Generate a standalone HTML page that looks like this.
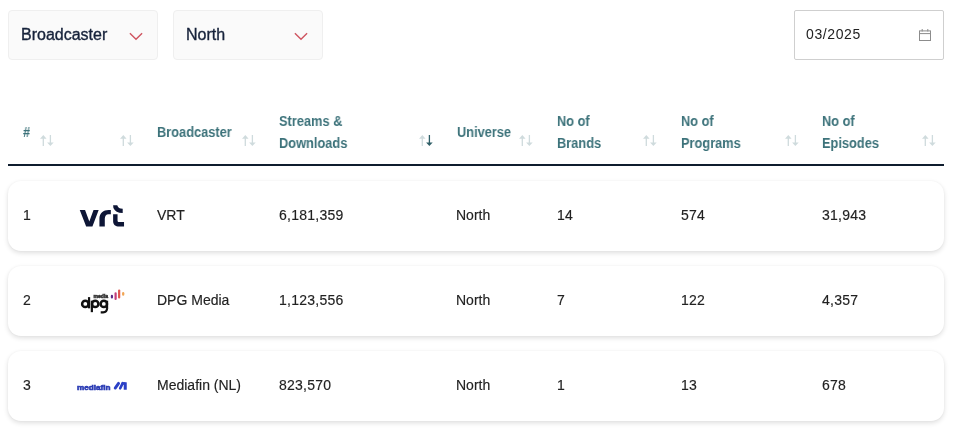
<!DOCTYPE html>
<html><head><meta charset="utf-8">
<style>
*{box-sizing:border-box;margin:0;padding:0}
html,body{width:960px;height:434px;background:#fff;overflow:hidden;font-family:"Liberation Sans",sans-serif;position:relative;-webkit-font-smoothing:antialiased}
.c,.t,.h,svg{will-change:transform}
.abs{position:absolute}
.sel{position:absolute;top:10px;width:150px;height:50px;background:#fafafa;border:1px solid #efefef;border-radius:4px}
.sel .t{position:absolute;left:12px;top:15px;font-size:16px;line-height:18px;color:#16223a;white-space:nowrap;-webkit-text-stroke:0.35px #16223a}
.sel svg{position:absolute;left:120px;top:21px}
.date{position:absolute;left:794px;top:10px;width:150px;height:50px;border:1px solid #cfcfcf;border-radius:2px;background:#fff}
.date .t{position:absolute;left:11px;top:15px;font-size:14px;line-height:16px;color:#222;white-space:nowrap;letter-spacing:0.6px}
.date svg{position:absolute;left:124px;top:18px}
.h{position:absolute;font-size:14px;font-weight:bold;color:#3c727a;line-height:22px;white-space:nowrap;transform:scaleX(0.915);transform-origin:0 0}
.si{position:absolute;top:134.8px}
.hline{position:absolute;left:8px;top:164px;width:936px;height:2px;background:#0f1d2e}
.card{position:absolute;left:8px;width:936px;height:70px;background:#fff;border-radius:13px;box-shadow:0 2px 5px rgba(0,0,0,0.13),0 0 2px rgba(0,0,0,0.04)}
.n{letter-spacing:0.25px}
.c{position:absolute;font-size:14px;line-height:16px;color:#222;white-space:nowrap;-webkit-text-stroke:0.15px #222}
</style></head><body>

<div class="sel" style="left:8px"><div class="t">Broadcaster</div>
<svg width="14" height="9" viewBox="0 0 14 9"><path d="M0.9 1.2 L7 7.3 L13.1 1.2" fill="none" stroke="#cf5561" stroke-width="1.4"/></svg></div>
<div class="sel" style="left:173px"><div class="t">North</div>
<svg width="14" height="9" viewBox="0 0 14 9"><path d="M0.9 1.2 L7 7.3 L13.1 1.2" fill="none" stroke="#cf5561" stroke-width="1.4"/></svg></div>

<div class="date"><div class="t">03/2025</div>
<svg width="12" height="12" viewBox="0 0 12 12"><rect x="0.5" y="1.9" width="11" height="9.6" fill="none" stroke="#8c8c8c" stroke-width="1"/><line x1="0.5" y1="4.6" x2="11.5" y2="4.6" stroke="#8c8c8c" stroke-width="1"/><line x1="3.2" y1="0" x2="3.2" y2="2.5" stroke="#8c8c8c"/><line x1="8.8" y1="0" x2="8.8" y2="2.5" stroke="#8c8c8c"/></svg></div>

<!-- header -->
<div class="h" style="left:23px;top:121px">#</div>
<div class="h" style="left:157px;top:121px">Broadcaster</div>
<div class="h" style="left:279px;top:110px">Streams &amp;<br>Downloads</div>
<div class="h" style="left:456.5px;top:121px">Universe</div>
<div class="h" style="left:557px;top:110px">No of<br>Brands</div>
<div class="h" style="left:681px;top:110px">No of<br>Programs</div>
<div class="h" style="left:822px;top:110px">No of<br>Episodes</div>



<svg class="si" style="left:40px" width="14" height="12" viewBox="0 0 14 12"><path d="M3.3 11V2.5" stroke="#cfdbdd" stroke-width="1.3"/><path d="M0 3.7L3.3 0L6.6 3.7Z" fill="#cfdbdd"/><path d="M10.4 0V8.5" stroke="#cfdbdd" stroke-width="1.3"/><path d="M7.1 7.4L10.4 11.1L13.7 7.4Z" fill="#cfdbdd"/></svg><svg class="si" style="left:120px" width="14" height="12" viewBox="0 0 14 12"><path d="M3.3 11V2.5" stroke="#cfdbdd" stroke-width="1.3"/><path d="M0 3.7L3.3 0L6.6 3.7Z" fill="#cfdbdd"/><path d="M10.4 0V8.5" stroke="#cfdbdd" stroke-width="1.3"/><path d="M7.1 7.4L10.4 11.1L13.7 7.4Z" fill="#cfdbdd"/></svg><svg class="si" style="left:242px" width="14" height="12" viewBox="0 0 14 12"><path d="M3.3 11V2.5" stroke="#cfdbdd" stroke-width="1.3"/><path d="M0 3.7L3.3 0L6.6 3.7Z" fill="#cfdbdd"/><path d="M10.4 0V8.5" stroke="#cfdbdd" stroke-width="1.3"/><path d="M7.1 7.4L10.4 11.1L13.7 7.4Z" fill="#cfdbdd"/></svg><svg class="si" style="left:419px" width="14" height="12" viewBox="0 0 14 12"><path d="M3.3 11V2.5" stroke="#cfdbdd" stroke-width="1.3"/><path d="M0 3.7L3.3 0L6.6 3.7Z" fill="#cfdbdd"/><path d="M10.4 0V8.5" stroke="#2f5f67" stroke-width="1.3"/><path d="M7.1 7.4L10.4 11.1L13.7 7.4Z" fill="#2f5f67"/></svg><svg class="si" style="left:519px" width="14" height="12" viewBox="0 0 14 12"><path d="M3.3 11V2.5" stroke="#cfdbdd" stroke-width="1.3"/><path d="M0 3.7L3.3 0L6.6 3.7Z" fill="#cfdbdd"/><path d="M10.4 0V8.5" stroke="#cfdbdd" stroke-width="1.3"/><path d="M7.1 7.4L10.4 11.1L13.7 7.4Z" fill="#cfdbdd"/></svg><svg class="si" style="left:643.4px" width="14" height="12" viewBox="0 0 14 12"><path d="M3.3 11V2.5" stroke="#cfdbdd" stroke-width="1.3"/><path d="M0 3.7L3.3 0L6.6 3.7Z" fill="#cfdbdd"/><path d="M10.4 0V8.5" stroke="#cfdbdd" stroke-width="1.3"/><path d="M7.1 7.4L10.4 11.1L13.7 7.4Z" fill="#cfdbdd"/></svg><svg class="si" style="left:784.7px" width="14" height="12" viewBox="0 0 14 12"><path d="M3.3 11V2.5" stroke="#cfdbdd" stroke-width="1.3"/><path d="M0 3.7L3.3 0L6.6 3.7Z" fill="#cfdbdd"/><path d="M10.4 0V8.5" stroke="#cfdbdd" stroke-width="1.3"/><path d="M7.1 7.4L10.4 11.1L13.7 7.4Z" fill="#cfdbdd"/></svg><svg class="si" style="left:922px" width="14" height="12" viewBox="0 0 14 12"><path d="M3.3 11V2.5" stroke="#cfdbdd" stroke-width="1.3"/><path d="M0 3.7L3.3 0L6.6 3.7Z" fill="#cfdbdd"/><path d="M10.4 0V8.5" stroke="#cfdbdd" stroke-width="1.3"/><path d="M7.1 7.4L10.4 11.1L13.7 7.4Z" fill="#cfdbdd"/></svg>
<div class="hline"></div>
<div class="card" style="top:181px"></div>
<div class="card" style="top:266px"></div>
<div class="card" style="top:351px"></div>

<div class="c n" style="left:23px;top:207px">1</div>
<div class="c" style="left:157px;top:207px">VRT</div>
<div class="c n" style="left:279px;top:207px">6,181,359</div>
<div class="c" style="left:456px;top:207px">North</div>
<div class="c n" style="left:557px;top:207px">14</div>
<div class="c n" style="left:681px;top:207px">574</div>
<div class="c n" style="left:822px;top:207px">31,943</div>

<div class="c n" style="left:23px;top:292px">2</div>
<div class="c" style="left:157px;top:292px">DPG Media</div>
<div class="c n" style="left:279px;top:292px">1,123,556</div>
<div class="c" style="left:456px;top:292px">North</div>
<div class="c n" style="left:557px;top:292px">7</div>
<div class="c n" style="left:681px;top:292px">122</div>
<div class="c n" style="left:822px;top:292px">4,357</div>

<div class="c n" style="left:23px;top:377px">3</div>
<div class="c" style="left:157px;top:377px">Mediafin (NL)</div>
<div class="c n" style="left:279px;top:377px">823,570</div>
<div class="c" style="left:456px;top:377px">North</div>
<div class="c n" style="left:557px;top:377px">1</div>
<div class="c n" style="left:681px;top:377px">13</div>
<div class="c n" style="left:822px;top:377px">678</div>

<svg class="abs" style="left:74px;top:200px" width="56" height="32" viewBox="0 0 760 434"><g fill="#0e1636">
<path d="M78 135L150 135L208 290L265 135L335 135L250 360L165 360Z"/>
<path d="M345 360L345 250C345 180 400 135 470 135L500 135L500 192L470 192C435 192 418 215 418 255L418 360Z"/>
<path d="M531 71L587 71C597 102 618 120 661 120L661 176C595 176 552 150 535 108Z"/>
<path d="M531 193L591 193L591 278C591 292 599 300 613 300L679 300L679 361L612 361C564 361 531 330 531 290Z"/>
</g></svg>
<svg class="abs" style="left:76px;top:284px" width="52" height="32" viewBox="0 0 705 434">
<g fill="none" stroke="#111" stroke-width="34"><circle cx="126" cy="270" r="43"/><circle cx="261" cy="270" r="43"/><circle cx="377" cy="270" r="43"/></g>
<g fill="#111"><rect x="162" y="178" width="30" height="152"/><rect x="200" y="226" width="30" height="156"/><rect x="406" y="226" width="30" height="110"/></g>
<path d="M421 330C421 368 400 384 368 384L335 384" fill="none" stroke="#111" stroke-width="30"/>
<text x="236" y="194" font-family="Liberation Sans" font-weight="bold" font-size="60" fill="#333" stroke="#333" stroke-width="6" textLength="200" lengthAdjust="spacingAndGlyphs">media</text>
<g stroke-linecap="round" stroke-width="30">
<path d="M487 162V183" stroke="#5a2a86"/>
<path d="M537 128V202" stroke="#c4407c"/>
<path d="M585 88V183" stroke="#df554e"/>
<path d="M640 124V146" stroke="#f1a555"/>
</g>
</svg>
<svg class="abs" style="left:74px;top:376px" width="56" height="18" viewBox="0 0 960 309">
<text x="52" y="238" font-family="Liberation Sans" font-weight="bold" font-size="128" fill="#2a3bb4" stroke="#2a3bb4" stroke-width="10" textLength="575" lengthAdjust="spacingAndGlyphs">mediafin</text>
<g stroke="#2b40c6" stroke-linecap="round"><path d="M707 207L764 127" stroke-width="50"/><path d="M793 210L836 124" stroke-width="46"/></g>
<rect x="853" y="106" width="52" height="130" rx="6" fill="#2b40c6"/>
<path d="M820 106L880 106L880 150L810 150Z" fill="#2b40c6"/>
</svg>

</body></html>
